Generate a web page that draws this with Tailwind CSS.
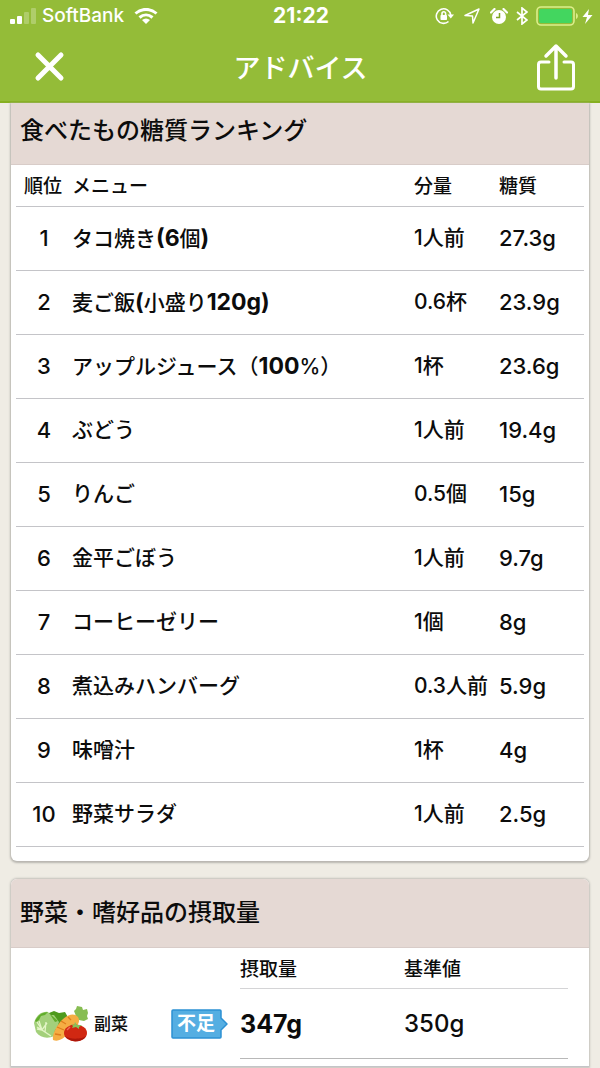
<!DOCTYPE html>
<html lang="ja">
<head>
    <meta charset="UTF-8">
    <meta name="viewport" content="width=device-width, initial-scale=1.0">
    <title>アドバイス</title>
    <script src="https://cdn.jsdelivr.net/npm/@tailwindcss/browser@4"></script>
</head>
<body class="min-h-screen bg-[#efece4] font-['Inter','Noto_Sans_CJK_JP',sans-serif] font-medium text-[#0c0c0c]">

    <header class="bg-[#94bc38] border-b-2 border-[#86b020] text-white">
        <!-- status bar -->
        <div class="grid grid-cols-3 items-center h-8 pl-2 pr-1.5">
            <div class="flex items-center gap-1.5">
                <svg class="w-7 h-4" viewBox="0 0 28 16" fill="#fff">
                    <rect x="2" y="11" width="5" height="5" rx="1"/>
                    <rect x="9" y="8" width="5" height="8" rx="1"/>
                    <rect x="16" y="4" width="5" height="12" rx="1" opacity=".25"/>
                    <rect x="23" y="0" width="5" height="16" rx="1" opacity=".25"/>
                </svg>
                <span class="text-[19px] leading-5">SoftBank</span>
                <svg class="w-6 h-4 ml-1" viewBox="0 0 24 16" fill="none" stroke="#fff" stroke-width="3">
                    <path d="M1.500 5.500C7.500 0 16.500 0 22.500 5.500M5.500 9.500c4-3.500 9-3.500 13 0"/>
                    <path d="M12 16l-4-4c2.500-2 5.500-2 8 0z" fill="#fff" stroke="none"/>
                </svg>
            </div>
            <span class="text-center text-[21px] leading-6 font-bold">21:22</span>
            <div class="flex items-center justify-end gap-2">
                <svg class="w-[19px] h-[18px]" viewBox="0 0 19 18" fill="none" stroke="#fff" stroke-width="1.600">
                    <path d="M13.500 14.500A7.300 7.300 0 1 1 15.800 8"/>
                    <path d="M12.500 7.500h6.500l-3.200 4z" fill="#fff" stroke="none"/>
                    <rect x="5.500" y="8" width="6.500" height="5" rx=".8" fill="#fff" stroke="none"/>
                    <path d="M7 8.500V6.500a1.800 1.800 0 0 1 3.600 0v2"/>
                </svg>
                <svg class="w-4 h-4 mx-0.5" viewBox="0 0 16 16" fill="none" stroke="#fff" stroke-width="1.500" stroke-linejoin="round">
                    <path d="M1 7.500L15 1 9 15l-.5-7z"/>
                </svg>
                <svg class="w-[18px] h-4" viewBox="0 0 18 16">
                    <circle cx="9" cy="9" r="7" fill="#fff"/>
                    <path d="M1 4.500L4.500 1M17 4.500L13.500 1" stroke="#fff" stroke-width="2.200" stroke-linecap="round"/>
                    <path d="M9.500 5v4.500H6" fill="none" stroke="#7fa522" stroke-width="1.500"/>
                </svg>
                <svg class="w-3 h-[18px]" viewBox="0 0 12 18" fill="none" stroke="#fff" stroke-width="1.700">
                    <path d="M1 5l10 8-5 4V1l5 4-10 8"/>
                </svg>
                <svg class="w-[58px] h-5" viewBox="0 0 58 20">
                    <rect x="1" y="1" width="37" height="18" rx="4" fill="none" stroke="#dcee8c" stroke-width="1.600"/>
                    <rect x="3" y="3" width="33" height="14" rx="2" fill="#43d65f"/>
                    <path d="M40 7c2.500 1 2.500 5 0 6z" fill="#dcee8c"/>
                    <path d="M53 3l-6.500 8H51l-2 7 7.500-9H52z" fill="#fff"/>
                </svg>
            </div>
        </div>
        <div class="flex items-center justify-between h-[69px] pl-[34px] pr-6">
            <button type="button" aria-label="閉じる">
                <svg class="w-[31px] h-[31px]" viewBox="0 0 31 31" stroke="#fff" stroke-width="5" stroke-linecap="round">
                    <path d="M4 4l23 23M27 4L4 27"/>
                </svg>
            </button>
            <h1 class="pt-1 text-[27px] leading-10 font-medium">アドバイス</h1>
            <button type="button" aria-label="共有">
                <svg class="w-10 h-12" viewBox="0 0 40 48" fill="none" stroke="#fff" stroke-width="3" stroke-linecap="round" stroke-linejoin="round">
                    <path d="M13 19H5a2.500 2.500 0 0 0-2.500 2.500v22A2.500 2.500 0 0 0 5 46h30a2.500 2.500 0 0 0 2.500-2.500v-22A2.500 2.500 0 0 0 35 19h-7"/>
                    <path d="M20 35V3M10 13L20 3l10 10" stroke-width="3.500"/>
                </svg>
            </button>
        </div>
    </header>

    <main class="px-[11px] space-y-[18px]">
        <section class="bg-white rounded-b-md shadow-[0_1px_2px_1px_#b8b6b0]">
            <h2 class="h-[62px] px-[9px] pt-2 bg-[#e5d9d4] border-b border-[#d8ccc8] text-2xl leading-10 font-medium">食べたもの糖質ランキング</h2>
            <div class="px-[5px] pb-[14px]">
                <table class="w-full table-fixed text-left text-[21px] leading-8">
                    <thead>
                        <tr class="h-[41px] border-b border-[#c4c4c8] text-[19px] leading-7">
                            <th class="w-14 pl-2 pt-1 font-medium whitespace-nowrap">順位</th>
                            <th class="pt-1 font-medium">メニュー</th>
                            <th class="w-[85px] pt-1 font-medium">分量</th>
                            <th class="w-[85px] pt-1 font-medium">糖質</th>
                        </tr>
                    </thead>
                    <tbody class="whitespace-nowrap">
                        <tr class="h-16 border-b border-[#c4c4c8]">
                            <td class="text-center text-[22px]">1</td>
                            <td>タコ焼き<b class="text-[23px]">(6</b>個<b class="text-[23px]">)</b></td>
                            <td>1人前</td>
                            <td class="text-[22px]">27.3g</td>
                        </tr>
                        <tr class="h-16 border-b border-[#c4c4c8]">
                            <td class="text-center text-[22px]">2</td>
                            <td>麦ご飯<b class="text-[23px]">(</b>小盛り<b class="text-[23px]">120g)</b></td>
                            <td>0.6杯</td>
                            <td class="text-[22px]">23.9g</td>
                        </tr>
                        <tr class="h-16 border-b border-[#c4c4c8]">
                            <td class="text-center text-[22px]">3</td>
                            <td>アップルジュース（<b class="text-[23px]">100</b>%）</td>
                            <td>1杯</td>
                            <td class="text-[22px]">23.6g</td>
                        </tr>
                        <tr class="h-16 border-b border-[#c4c4c8]">
                            <td class="text-center text-[22px]">4</td>
                            <td>ぶどう</td>
                            <td>1人前</td>
                            <td class="text-[22px]">19.4g</td>
                        </tr>
                        <tr class="h-16 border-b border-[#c4c4c8]">
                            <td class="text-center text-[22px]">5</td>
                            <td>りんご</td>
                            <td>0.5個</td>
                            <td class="text-[22px]">15g</td>
                        </tr>
                        <tr class="h-16 border-b border-[#c4c4c8]">
                            <td class="text-center text-[22px]">6</td>
                            <td>金平ごぼう</td>
                            <td>1人前</td>
                            <td class="text-[22px]">9.7g</td>
                        </tr>
                        <tr class="h-16 border-b border-[#c4c4c8]">
                            <td class="text-center text-[22px]">7</td>
                            <td>コーヒーゼリー</td>
                            <td>1個</td>
                            <td class="text-[22px]">8g</td>
                        </tr>
                        <tr class="h-16 border-b border-[#c4c4c8]">
                            <td class="text-center text-[22px]">8</td>
                            <td>煮込みハンバーグ</td>
                            <td>0.3人前</td>
                            <td class="text-[22px]">5.9g</td>
                        </tr>
                        <tr class="h-16 border-b border-[#c4c4c8]">
                            <td class="text-center text-[22px]">9</td>
                            <td>味噌汁</td>
                            <td>1杯</td>
                            <td class="text-[22px]">4g</td>
                        </tr>
                        <tr class="h-16 border-b border-[#c4c4c8]">
                            <td class="text-center text-[22px]">10</td>
                            <td>野菜サラダ</td>
                            <td>1人前</td>
                            <td class="text-[22px]">2.5g</td>
                        </tr>
                    </tbody>
                </table>
            </div>
        </section>

        <section class="bg-white rounded-t-md border-b border-[#c4c4c8] shadow-[0_0_2px_1px_#c4c2bc]">
            <h2 class="h-[69px] px-[9px] pt-[14px] rounded-t-md bg-[#e5d9d4] border-b border-[#d8ccc8] text-2xl leading-10 font-medium">野菜・嗜好品の摂取量</h2>
            <div class="pl-[22px] pr-[21px] pb-[7px]">
                <table class="w-full table-fixed text-left text-2xl leading-8">
                    <thead>
                        <tr class="h-[41px] text-[19px] leading-7">
                            <td class="w-[138px]"></td>
                            <td class="w-[69px]"></td>
                            <th class="pt-1 font-medium border-b border-[#d4d4d6]">摂取量</th>
                            <th class="pt-1 font-medium border-b border-[#d4d4d6]">基準値</th>
                        </tr>
                    </thead>
                    <tbody>
                        <tr class="h-[70px]">
                            <td>
                                <div class="flex items-center gap-1.5">
                                    <svg class="w-[55px] h-9" viewBox="0 0 55 36">
                                        <path d="M16 7l5-2 5 2 6-1 4 7-6 16H17z" fill="#4f9a1e"/>
                                        <path d="M1 17C3 9 9 5 15 6l3 3 3 0 5 7-2 6-2 2-1 6C15 33 7 32 3 26z" fill="#a3d07b"/>
                                        <path d="M2 15C5 9 9 6 15 6l-3 3-4 1-2 4-3 2zM16 7l6 9 3-1" fill="#61ad2c"/>
                                        <path d="M4 16l5 8 9 6M6 15l3 9M4 21l5 3 5-7M13 16l-1 10M9 24l-5-1" fill="none" stroke="#e4f5c8" stroke-width="1.300"/>
                                        <path d="M43 10l-2-5 2-2 1-3 5 1 1 3 4-1 1 4-1 3 1 3-4 2-5-1-3 2z" fill="#87bd52"/>
                                        <path d="M20 34c-1-5 3-14 9-20 5-5 12-8 16-3 3 5-1 10-6 13-6 5-11 13-19 10z" fill="#f5ad43"/>
                                        <path d="M24 21l7 3M28 15l5 3M22 28l6 1M35 11l3 3" stroke="#df7d1d" stroke-width="1.300"/>
                                        <ellipse cx="42.500" cy="27" rx="11.500" ry="8.500" fill="#d12812"/>
                                        <path d="M32 30c4 6 17 8 21 0-3 3-16 4-21 0z" fill="#ac170b"/>
                                        <path d="M38 18l3 1 1-3 2 3 5 0-3 2 0 2-3-2-4 1 1-2z" fill="#88c15a"/>
                                        <path d="M34 24l3-3" stroke="#ee6d53" stroke-width="1.500"/>
                                    </svg>
                                    <span class="text-[17px] leading-6">副菜</span>
                                </div>
                            </td>
                            <td>
                                <!-- arrow label -->
                                <div class="relative w-[57px] h-[30px]">
                                    <svg class="absolute inset-0 w-full h-full" viewBox="0 0 57 30" fill="#55aee2" stroke="#2d91d3" stroke-width="1.500" stroke-linejoin="round">
                                        <path d="M2 1h47q1 0 1 1v7l6 6-6 6v7q0 1-1 1H2q-1 0-1-1V2q0-1 1-1z"/>
                                    </svg>
                                    <span class="relative block pl-[6px] text-[19px] leading-[30px] font-bold text-white">不足</span>
                                </div>
                            </td>
                            <td class="text-[25px] font-bold border-b border-[#b8b8b8]">347g</td>
                            <td class="border-b border-[#b8b8b8]">350g</td>
                        </tr>
                    </tbody>
                </table>
            </div>
        </section>
    </main>

</body>
</html>
